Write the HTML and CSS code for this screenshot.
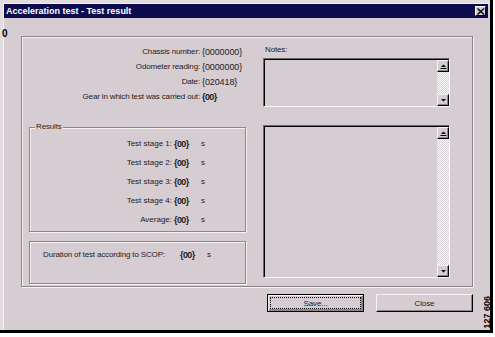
FILE: index.html
```html
<!DOCTYPE html>
<html>
<head>
<meta charset="utf-8">
<title>Acceleration test - Test result</title>
<link rel="stylesheet" href="styles.css">
</head>
<body>
<div class="win">
  <div class="titlebar">
    <span class="title">Acceleration test - Test result</span>
    <span class="xbtn"><svg width="8" height="7" viewBox="0 0 8 7"><path d="M0.5 0.5 L7 6.5 M7 0.5 L0.5 6.5" stroke="#000" stroke-width="1.4" fill="none"/></svg></span>
  </div>
  <div class="client">
    <div class="mark">0</div>
    <div class="main">
      <div class="panel">
        <div class="leftcol">
          <div class="info">
            <span class="lbl">Chassis number:</span><span class="val">{0000000}</span>
            <span class="lbl">Odometer reading:</span><span class="val">{0000000}</span>
            <span class="lbl">Date:</span><span class="val">{020418}</span>
            <span class="lbl">Gear in which test was carried out:</span><span class="val num">{00}</span>
          </div>
          <fieldset class="group results">
            <legend>Results</legend>
            <div class="stages">
              <span class="lbl">Test stage 1:</span><span class="num">{00}</span><span class="unit">s</span>
              <span class="lbl">Test stage 2:</span><span class="num">{00}</span><span class="unit">s</span>
              <span class="lbl">Test stage 3:</span><span class="num">{00}</span><span class="unit">s</span>
              <span class="lbl">Test stage 4:</span><span class="num">{00}</span><span class="unit">s</span>
              <span class="lbl">Average:</span><span class="num">{00}</span><span class="unit">s</span>
            </div>
          </fieldset>
          <div class="group duration">
            <span class="dlbl">Duration of test according to SCOP:</span><span class="num dnum">{00}</span><span class="unit">s</span>
          </div>
        </div>
        <div class="rightcol">
          <div class="noteslbl">Notes:</div>
          <div class="textbox notes">
            <div class="sb">
              <span class="sbtn"><svg width="7" height="5" viewBox="0 0 7 5"><path d="M3.5 0.5 L6 3 L1 3 Z" fill="#000"/><path d="M0.5 4.5 H6.5" stroke="#000" stroke-width="1"/></svg></span>
              <span class="track"></span>
              <span class="sbtn"><svg width="7" height="5" viewBox="0 0 7 5"><path d="M1 1 L6 1 L3.5 3.5 Z" fill="#000"/></svg></span>
            </div>
          </div>
          <div class="textbox big">
            <div class="sb">
              <span class="sbtn"><svg width="7" height="5" viewBox="0 0 7 5"><path d="M3.5 0.5 L6 3 L1 3 Z" fill="#000"/><path d="M0.5 4.5 H6.5" stroke="#000" stroke-width="1"/></svg></span>
              <span class="track"></span>
              <span class="sbtn"><svg width="7" height="5" viewBox="0 0 7 5"><path d="M1 1 L6 1 L3.5 3.5 Z" fill="#000"/></svg></span>
            </div>
          </div>
        </div>
      </div>
      <div class="btnrow">
        <button class="btn default"><span class="focus">Save...</span></button>
        <button class="btn">Close</button>
        <span class="ref">127 606</span>
      </div>
    </div>
  </div>
</div>
</body>
</html>
```

FILE: styles.css
```css
html, body {
  margin: 0;
  padding: 0;
  background: #ffffff;
}
body {
  font-family: "Liberation Sans", Arial, sans-serif;
  font-size: 8px;
  letter-spacing: -0.15px;
  color: #1e1c1e;
}
.win {
  width: 493px;
  height: 333px;
  box-sizing: border-box;
  background: #d5cdd2;
  border-right: 3px solid #000;
  border-bottom: 3px solid #000;
  padding: 4px 0 0 4px;
  box-shadow: inset 3px 3px 0 #e2dce0, inset 4px 4px 0 #f6f2f4;
}
.titlebar {
  height: 14px;
  margin-right: 2px;
  background: #0c0b4e;
  display: flex;
  align-items: center;
  justify-content: space-between;
}
.title {
  font-weight: bold;
  font-size: 9px;
  letter-spacing: 0;
  color: #fff;
  padding-left: 2px;
  line-height: 14px;
}
.xbtn {
  width: 11px;
  height: 10px;
  box-sizing: border-box;
  margin-right: 2px;
  background: #d5cdd2;
  border-top: 1px solid #fff;
  border-left: 1px solid #fff;
  border-right: 1px solid #000;
  border-bottom: 1px solid #000;
  display: flex;
  align-items: center;
  justify-content: center;
}
.client {
  display: flex;
}
.mark {
  flex: none;
  width: 19px;
  margin-left: -2px;
  margin-top: 11px;
  font-weight: bold;
  font-size: 10px;
  line-height: 10px;
  color: #000;
  align-self: flex-start;
}
.main {
  margin-top: 18px;
  width: 452px;
  flex: none;
}
.panel {
  height: 251px;
  box-sizing: border-box;
  border: 1px solid #8c868a;
  box-shadow: inset 1px 1px 0 #f6f2f4, 1px 1px 0 #f6f2f4;
  display: flex;
}
.leftcol {
  width: 224px;
  flex: none;
}
.info {
  display: grid;
  grid-template-columns: 178px auto;
  grid-auto-rows: 15px;
  align-items: center;
  padding-top: 7px;
}
.lbl {
  text-align: right;
  white-space: nowrap;
  line-height: 12px;
}
.val {
  padding-left: 2px;
  line-height: 12px;
  font-size: 9px;
  letter-spacing: -0.1px;
}
.num {
  font-weight: bold;
  font-size: 9px;
  letter-spacing: -0.6px;
  line-height: 12px;
}
.group {
  border: 1px solid #8c868a;
  box-shadow: inset 1px 1px 0 #f6f2f4, 1px 1px 0 #f6f2f4;
}
.results {
  margin: 18px 0 0 7px;
  padding: 0 0 2px 0;
  width: 217px;
  box-sizing: border-box;
  min-width: 0;
}
.results legend {
  margin-left: 5px;
  padding: 0 1px;
  line-height: 10px;
}
.stages {
  display: grid;
  grid-template-columns: 142px 29px auto;
  grid-auto-rows: 19px;
  align-items: center;
  padding-top: 2px;
}
.stages .lbl {
  letter-spacing: 0;
}
.stages .num {
  padding-left: 2px;
}
.unit {
  line-height: 12px;
}
.duration {
  margin: 9px 0 0 7px;
  width: 217px;
  height: 43px;
  box-sizing: border-box;
  display: flex;
  align-items: flex-start;
  padding: 7px 0 0 13px;
  line-height: 12px;
}
.dlbl {
  white-space: nowrap;
  width: 129px;
}
.dnum {
  margin-left: 8px;
  width: 27px;
}
.rightcol {
  margin-left: 17px;
  width: 187px;
  flex: none;
  padding-top: 8px;
}
.noteslbl {
  line-height: 10px;
  margin-left: 2px;
}
.textbox {
  box-sizing: border-box;
  border-top: 1px solid #6e686c;
  border-left: 1px solid #6e686c;
  border-right: 1px solid #fbf8fa;
  border-bottom: 1px solid #fbf8fa;
  box-shadow: inset 1px 1px 0 #000;
  display: flex;
  justify-content: flex-end;
}
.notes {
  margin-top: 3px;
  height: 49px;
}
.big {
  margin-top: 18px;
  height: 153px;
}
.sb {
  width: 12px;
  display: flex;
  flex-direction: column;
  padding-top: 1px;
}
.sbtn {
  height: 12px;
  box-sizing: border-box;
  background: #d5cdd2;
  border-top: 1px solid #f6f2f4;
  border-left: 1px solid #f6f2f4;
  border-right: 1px solid #000;
  border-bottom: 1px solid #000;
  box-shadow: inset -1px -1px 0 #8c868a;
  display: flex;
  align-items: center;
  justify-content: center;
  flex: none;
}
.track {
  flex: 1;
  background-color: #d5cdd2;
  background-image: conic-gradient(#ffffff 25%, #d5cdd2 0 50%, #ffffff 0 75%, #d5cdd2 0);
  background-size: 2px 2px;
}
.btnrow {
  display: flex;
  align-items: flex-start;
  margin-top: 7px;
  padding-left: 246px;
  gap: 12px;
}
.btn {
  flex: none;
  width: 97px;
  height: 18px;
  box-sizing: border-box;
  margin: 0;
  padding: 0;
  font-family: inherit;
  font-size: 8px;
  letter-spacing: -0.1px;
  color: #1e1c1e;
  background: #d5cdd2;
  border-top: 1px solid #f6f2f4;
  border-left: 1px solid #f6f2f4;
  border-right: 1px solid #000;
  border-bottom: 1px solid #000;
  box-shadow: inset -1px -1px 0 #8c868a;
  display: flex;
  align-items: center;
  justify-content: center;
}
.btn.default {
  border: 1px solid #000;
  box-shadow: inset 1px 1px 0 #f6f2f4, inset -2px -2px 0 #8c868a;
  padding: 2px;
}
.focus {
  flex: 1;
  align-self: stretch;
  border: 1px dotted #000;
  display: flex;
  align-items: center;
  justify-content: center;
}
.ref {
  flex: none;
  margin-left: -2px;
  margin-top: 2px;
  writing-mode: vertical-rl;
  transform: rotate(180deg);
  font-weight: bold;
  font-size: 9px;
  letter-spacing: 0;
  line-height: 8px;
  color: #000;
}
```
